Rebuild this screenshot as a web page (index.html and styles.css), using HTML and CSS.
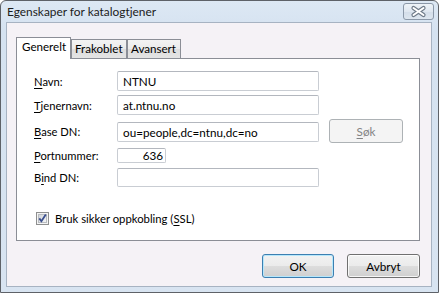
FILE: index.html
```html
<!DOCTYPE html>
<html lang="no">
<head>
<meta charset="utf-8">
<title>Egenskaper for katalogtjener</title>
<link rel="stylesheet" href="styles.css">
</head>
<body>
<div class="window">
  <div class="titlebar">
    <span class="title">Egenskaper for katalogtjener</span>
    <div class="close">
      <svg width="31" height="17" viewBox="0 0 31 17">
        <path d="M10.5 5 L20.5 12 M20.5 5 L10.5 12" stroke="#6f7b89" stroke-width="4.2" stroke-linecap="round"/>
        <path d="M10.5 5 L20.5 12 M20.5 5 L10.5 12" stroke="#ffffff" stroke-width="2" stroke-linecap="round"/>
      </svg>
    </div>
  </div>
  <div class="client">
    <div class="tabs">
      <div class="tab active">Generelt</div>
      <div class="tab t2">Frakoblet</div>
      <div class="tab t3">Avansert</div>
    </div>
    <div class="panel">
      <div class="row r1">
        <span class="label"><u>N</u>avn:</span>
        <div class="input">NTNU</div>
      </div>
      <div class="row r2">
        <span class="label"><u>T</u>jenernavn:</span>
        <div class="input">at.ntnu.no</div>
      </div>
      <div class="row r3">
        <span class="label"><u>B</u>ase DN:</span>
        <div class="input">ou=people,dc=ntnu,dc=no</div>
        <div class="btn disabled sok"><u>S</u>øk</div>
      </div>
      <div class="row r4">
        <span class="label"><u>P</u>ortnummer:</span>
        <div class="input port">636</div>
      </div>
      <div class="row r5">
        <span class="label">B<u>i</u>nd DN:</span>
        <div class="input"></div>
      </div>
      <div class="check-row">
        <span class="checkbox">
          <svg width="13" height="13" viewBox="0 0 13 13">
            <defs>
              <linearGradient id="cbg" x1="0" y1="0" x2="1" y2="1">
                <stop offset="0" stop-color="#cfd3d8"/>
                <stop offset="1" stop-color="#f6f7f8"/>
              </linearGradient>
            </defs>
            <rect x="0.5" y="0.5" width="12" height="12" fill="#f4f4f4" stroke="#8e8f8f"/>
            <rect x="2.5" y="2.5" width="8" height="8" fill="url(#cbg)" stroke="#b9bcc0"/>
            <path d="M3.3 6.4 L5.4 9.2 L9.8 2.6" fill="none" stroke="#3b4f8e" stroke-width="1.8"/>
          </svg>
        </span>
        <span class="check-label">Bruk sikker oppkobling (<u>S</u>SL)</span>
      </div>
    </div>
    <div class="buttons">
      <div class="btn default ok">OK</div>
      <div class="btn cancel">Avbryt</div>
    </div>
  </div>
</div>
</body>
</html>
```

FILE: styles.css
```css
* { box-sizing: border-box; }

html, body {
  margin: 0;
  padding: 0;
  background: #ffffff;
}

body {
  font-family: Lato, "Noto Sans", sans-serif;
  font-size: 11.2px;
  color: #000;
}

u { text-decoration: underline; text-underline-offset: 2px; }

.window {
  width: 439px;
  height: 293px;
  border: 1px solid #5e6268;
  border-radius: 6px 6px 0 0;
  background: linear-gradient(#dde8f4, #d5e2f0 30px, #d8e4f1);
  padding: 0 6px 5px 5px;
  display: flex;
  flex-direction: column;
}

.titlebar {
  height: 21px;
  display: flex;
  align-items: flex-start;
  justify-content: space-between;
  margin-right: -2px;
}

.title {
  padding-left: 1px;
  padding-top: 3px;
  font-size: 11.9px;
  line-height: 15px;
  color: #1b1b1b;
}

.close {
  width: 31px;
  height: 17px;
  margin-top: 2px;
  border: 1px solid #8b98a8;
  border-radius: 3px;
  background: linear-gradient(#eef3f8, #dfe7f0 50%, #d3dde9 51%, #dde6ef);
  display: flex;
}

.close svg { margin: -1px; }

.client {
  flex: 1;
  border: 1px solid #a7b3c2;
  background: #f5f2f6;
  padding: 14px 11px 0 9px;
  display: flex;
  flex-direction: column;
}

.tabs {
  display: flex;
  align-items: flex-end;
  height: 21px;
  position: relative;
  z-index: 1;
}

.tab {
  height: 19px;
  border: 1px solid #8b8e96;
  border-bottom: none;
  background: linear-gradient(#f3f3f3, #ebebeb 50%, #dedede 51%, #e4e4e4);
  line-height: 17px;
  padding-left: 2px;
  font-size: 11.6px;
}

.tab.active {
  height: 22px;
  margin-bottom: -1px;
  width: 55px;
  background: #ffffff;
  padding-left: 5px;
  line-height: 18px;
}

.tab.t2 { width: 56px; padding-left: 3px; }
.tab.t3 { width: 54px; padding-left: 3px; }

.panel {
  height: 183px;
  border: 1px solid #8b8e96;
  background: #ffffff;
  padding: 12px 0 0 17px;
  display: flex;
  flex-direction: column;
}

.row {
  display: flex;
  align-items: center;
}

.r1 { height: 20px; }
.r2 { height: 20px; margin-top: 4px; }
.r3 { height: 24px; margin-top: 4px; }
.r4 { height: 15px; margin-top: 5px; }
.r5 { height: 19px; margin-top: 5px; }

.label {
  width: 83px;
  flex: none;
}

.input {
  width: 202px;
  height: 20px;
  border: 1px solid #c9cdd3;
  border-top-color: #b3b7be;
  border-radius: 2px;
  background: #ffffff;
  padding: 0 5px;
  line-height: 18px;
  font-size: 11.7px;
  white-space: nowrap;
  overflow: hidden;
}

.r3 .input { margin-top: 1px; }
.r5 .input { height: 19px; }

.input.port {
  width: 49px;
  height: 15px;
  line-height: 13px;
  text-align: right;
  padding: 0 2px;
}

.btn {
  height: 24px;
  border: 1px solid #707070;
  border-radius: 3px;
  background: linear-gradient(#f2f2f2, #ebebeb 50%, #dddddd 51%, #cfcfcf);
  box-shadow: inset 0 0 0 1px rgba(255,255,255,0.8);
  display: flex;
  align-items: center;
  justify-content: center;
  line-height: 16px;
  font-size: 11.7px;
}

.btn.disabled {
  border-color: #adb2b5;
  background: #f4f4f4;
  color: #838383;
  box-shadow: none;
}

.sok {
  width: 74px;
  margin-left: 10px;
}

.check-row {
  display: flex;
  align-items: center;
  height: 13px;
  margin-top: 25px;
  padding-left: 2px;
}

.checkbox {
  width: 13px;
  height: 13px;
  display: flex;
}

.check-label {
  margin-left: 6px;
  line-height: 15px;
  font-size: 11.3px;
}

.buttons {
  display: flex;
  justify-content: flex-end;
  gap: 13px;
  margin-top: 13px;
}

.btn.ok { width: 72px; }
.btn.cancel { width: 73px; }

.btn.default {
  border-color: #3c7fb1;
  box-shadow: inset 0 0 0 1px #b6e7fb;
}
```
